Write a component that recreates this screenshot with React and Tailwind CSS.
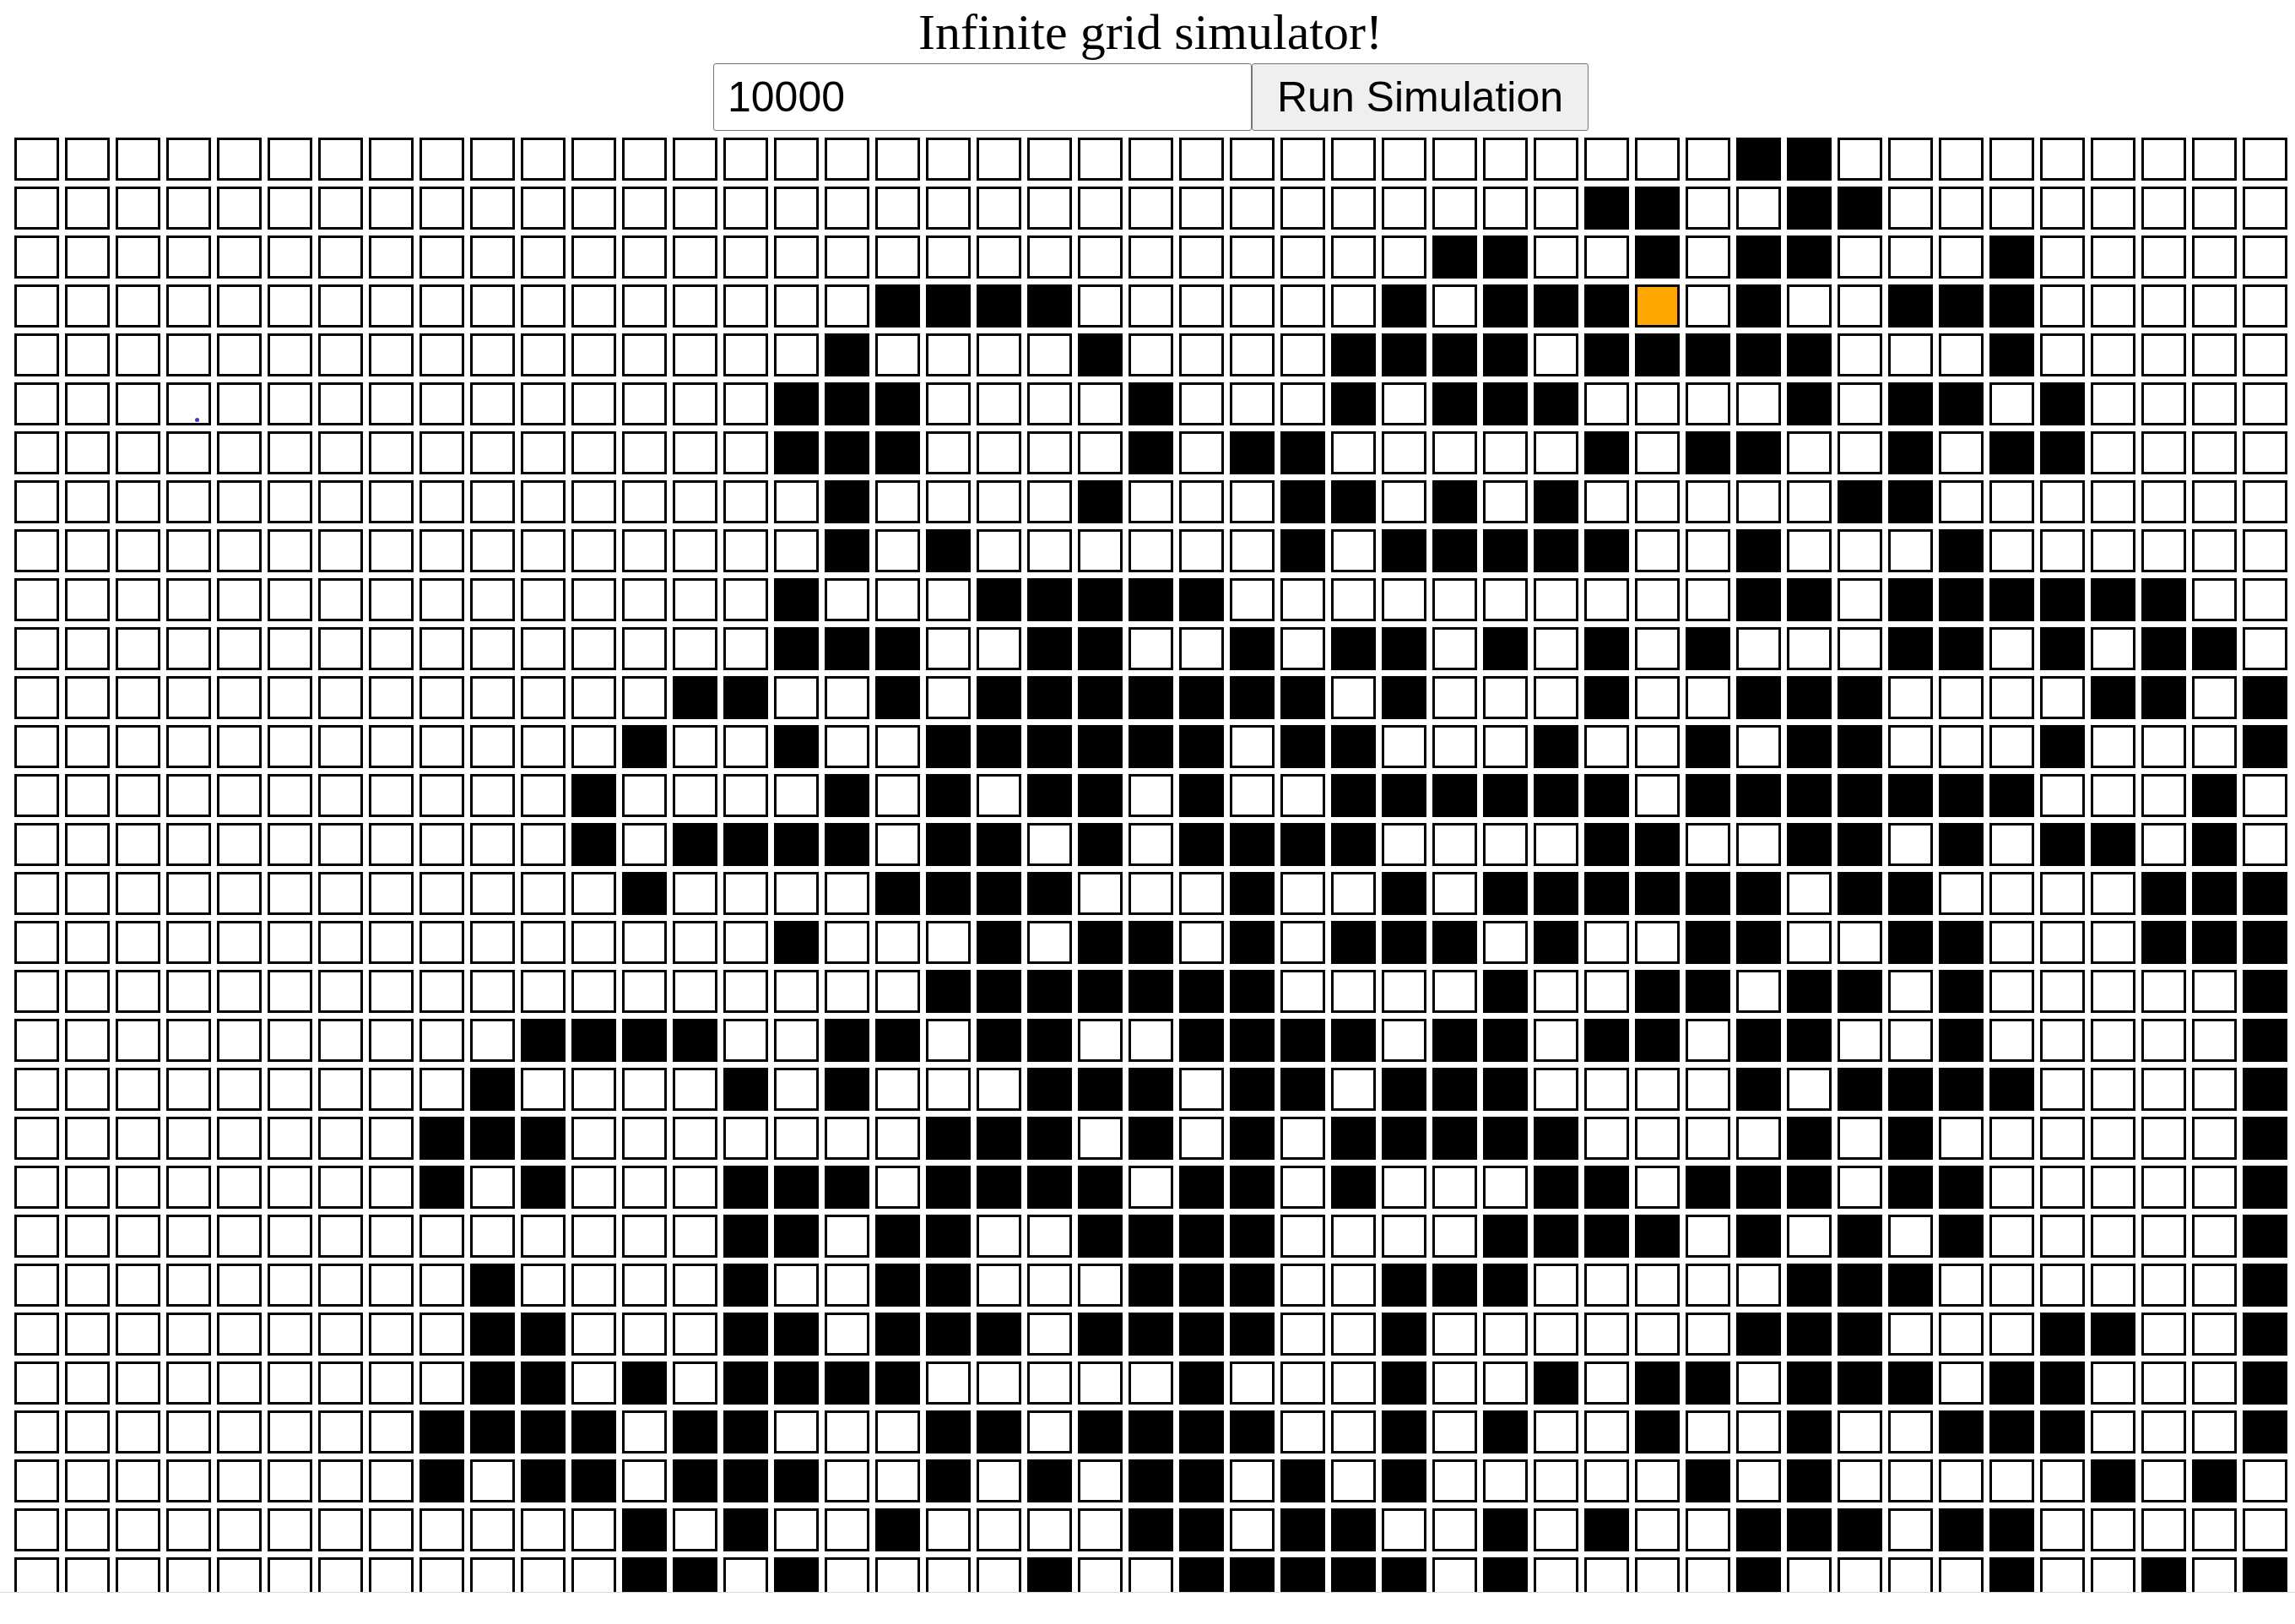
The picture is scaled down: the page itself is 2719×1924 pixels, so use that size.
const BLACK = [
  [34, 35],
  [31, 32, 35, 36],
  [28, 29, 32, 34, 35, 39],
  [17, 18, 19, 20, 27, 29, 30, 31, 34, 37, 38, 39],
  [16, 21, 26, 27, 28, 29, 31, 32, 33, 34, 35, 39],
  [15, 16, 17, 22, 26, 28, 29, 30, 35, 37, 38, 40],
  [15, 16, 17, 22, 24, 25, 31, 33, 34, 37, 39, 40],
  [16, 21, 25, 26, 28, 30, 36, 37],
  [16, 18, 25, 27, 28, 29, 30, 31, 34, 38],
  [15, 19, 20, 21, 22, 23, 34, 35, 37, 38, 39, 40, 41, 42],
  [15, 16, 17, 20, 21, 24, 26, 27, 29, 31, 33, 37, 38, 40, 42, 43],
  [13, 14, 17, 19, 20, 21, 22, 23, 24, 25, 27, 31, 34, 35, 36, 41, 42, 44],
  [12, 15, 18, 19, 20, 21, 22, 23, 25, 26, 30, 33, 35, 36, 40, 44],
  [11, 16, 18, 20, 21, 23, 26, 27, 28, 29, 30, 31, 33, 34, 35, 36, 37, 38, 39, 43],
  [11, 13, 14, 15, 16, 18, 19, 21, 23, 24, 25, 26, 31, 32, 35, 36, 38, 40, 41, 43],
  [12, 17, 18, 19, 20, 24, 27, 29, 30, 31, 32, 33, 34, 36, 37, 42, 43, 44],
  [15, 19, 21, 22, 24, 26, 27, 28, 30, 33, 34, 37, 38, 42, 43, 44],
  [18, 19, 20, 21, 22, 23, 24, 29, 32, 33, 35, 36, 38, 44],
  [10, 11, 12, 13, 16, 17, 19, 20, 23, 24, 25, 26, 28, 29, 31, 32, 34, 35, 38, 44],
  [9, 14, 16, 20, 21, 22, 24, 25, 27, 28, 29, 34, 36, 37, 38, 39, 44],
  [8, 9, 10, 18, 19, 20, 22, 24, 26, 27, 28, 29, 30, 35, 37, 44],
  [8, 10, 14, 15, 16, 18, 19, 20, 21, 23, 24, 26, 30, 31, 33, 34, 35, 37, 38, 44],
  [14, 15, 17, 18, 21, 22, 23, 24, 29, 30, 31, 32, 34, 36, 38, 44],
  [9, 14, 17, 18, 22, 23, 24, 27, 28, 29, 35, 36, 37, 44],
  [9, 10, 14, 15, 17, 18, 19, 21, 22, 23, 24, 27, 34, 35, 36, 40, 41, 44],
  [9, 10, 12, 14, 15, 16, 17, 23, 27, 30, 32, 33, 35, 36, 37, 39, 40, 44],
  [8, 9, 10, 11, 13, 14, 18, 19, 21, 22, 23, 24, 27, 29, 32, 35, 38, 39, 40, 44],
  [8, 10, 11, 13, 14, 15, 18, 20, 22, 23, 25, 27, 33, 35, 41, 43],
  [12, 14, 17, 22, 23, 25, 26, 29, 31, 34, 35, 36, 38, 39],
  [12, 13, 15, 20, 23, 24, 25, 26, 27, 29, 34, 39, 42, 44],
];

const COLS = Array.from({ length: 45 }, (_, i) => i);

function Cell({ row, col }) {
  const isOrange = row === 3 && col === 32;
  const isBlack = BLACK[row].includes(col);
  const hasDot = row === 5 && col === 3;
  return (
    <div
      className={`relative w-[53px] h-[51px] shrink-0 border-[3px] border-black ${
        isOrange ? "bg-[#ffa500]" : isBlack ? "bg-black" : "bg-white"
      }`}
    >
      {hasDot && (
        <span className="absolute left-[31px] top-[39px] w-[5px] h-[5px] rounded-full bg-[#3b3bd6]" />
      )}
    </div>
  );
}

export default function App() {
  return (
    <div className="w-full bg-white text-black">
      <h1 className="text-center text-[60px] font-normal pt-[2px] pl-[7px] leading-[73px] font-['Liberation_Serif',serif]">
        Infinite grid simulator!
      </h1>
      <div className="flex justify-center pl-[8px] font-['Liberation_Sans',sans-serif]">
        <input
          defaultValue="10000"
          className="w-[638px] h-[80px] px-[16px] text-[50px] border border-[#767676] rounded-[3px] bg-white text-black outline-none"
        />
        <button className="w-[399px] h-[80px] text-[50px] text-black border border-[#767676] rounded-[3px] bg-[#efefef]">
          Run Simulation
        </button>
      </div>
      <div className="h-[1732px] pt-[8px] px-[17px] overflow-hidden border-b border-[#d9d9d9] flex flex-col gap-[7px]">
        {BLACK.map((_, row) => (
          <div key={row} className="flex gap-[7px] shrink-0">
            {COLS.map((col) => (
              <Cell key={col} row={row} col={col} />
            ))}
          </div>
        ))}
      </div>
    </div>
  );
}
